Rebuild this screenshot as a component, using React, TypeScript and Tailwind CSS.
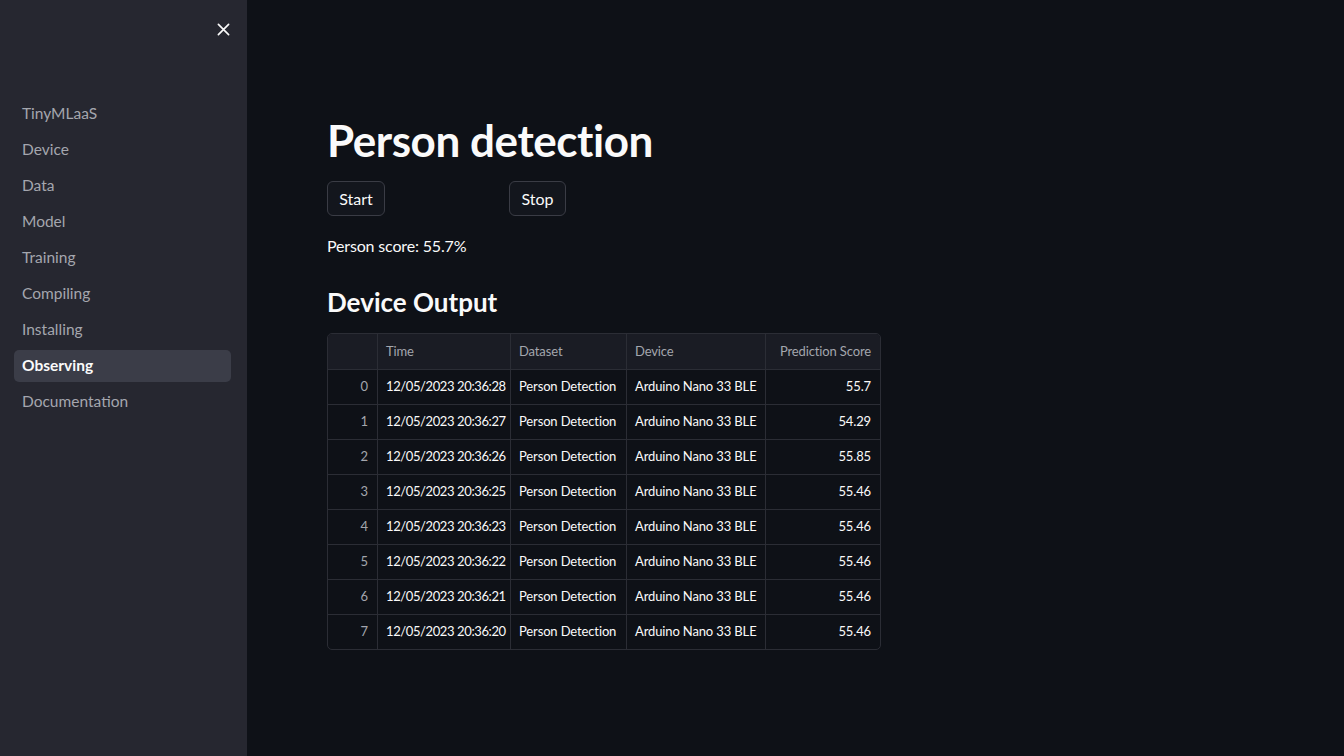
import React from "react";

const nav = ["TinyMLaaS", "Device", "Data", "Model", "Training", "Compiling", "Installing", "Observing", "Documentation"];

const rows = [
  ["0", "12/05/2023 20:36:28", "55.7"],
  ["1", "12/05/2023 20:36:27", "54.29"],
  ["2", "12/05/2023 20:36:26", "55.85"],
  ["3", "12/05/2023 20:36:25", "55.46"],
  ["4", "12/05/2023 20:36:23", "55.46"],
  ["5", "12/05/2023 20:36:22", "55.46"],
  ["6", "12/05/2023 20:36:21", "55.46"],
  ["7", "12/05/2023 20:36:20", "55.46"],
];

const cols = "grid grid-cols-[50px_133px_116px_139px_114px]";

export default function App() {
  return (
    <div
      className="flex h-[756px] w-[1344px] overflow-hidden bg-[#0e1117] text-[#fafafa]"
      style={{ fontFamily: "Lato, 'Noto Sans', sans-serif" }}
    >
      <aside className="flex w-[247px] shrink-0 flex-col bg-[#262730]">
        <div className="flex h-[46px] items-end justify-end pr-[17px]">
          <svg width="13" height="13" viewBox="0 0 14 14" className="mb-[10px]">
            <path d="M1.5 1.5L12.5 12.5M12.5 1.5L1.5 12.5" stroke="#fafafa" strokeWidth="1.8" strokeLinecap="round" />
          </svg>
        </div>
        <nav className="mt-[52px] flex flex-col gap-[4px] pl-[14px] pr-[16px]">
          {nav.map((n) => (
            <div
              key={n}
              className={
                n === "Observing"
                  ? "flex h-[32px] items-center rounded-[5px] bg-[#3b3d48] px-[8px] text-[15.5px] font-bold text-[#fafafa]"
                  : "flex h-[32px] items-center px-[8px] text-[15.5px] text-[#a4a6ae]"
              }
            >
              {n}
            </div>
          ))}
        </nav>
      </aside>
      <main className="flex-1 pl-[80px] pt-[112px]">
        <h1 className="text-[44px] font-bold leading-[56px] tracking-[-0.01em]">Person detection</h1>
        <div className="mt-[13px] flex gap-[124px]">
          <button className="h-[35px] w-[58px] rounded-[6px] border border-[#3a3c45] bg-[#13161d] text-[16px]">Start</button>
          <button className="h-[35px] w-[57px] rounded-[6px] border border-[#3a3c45] bg-[#13161d] text-[16px]">Stop</button>
        </div>
        <p className="mt-[18px] text-[16px] tracking-[-0.01em]">Person score: 55.7%</p>
        <h2 className="mt-[24px] text-[26px] font-bold leading-[40px]">Device Output</h2>
        <div className="mt-[11px] w-[554px] overflow-hidden rounded-[5px] border border-[#2b2d35] text-[13px] tracking-[-0.01em]">
          <div className={`${cols} h-[35px] bg-[#1a1c24] text-[#a3a6ad]`}>
            <div className="border-r border-[#2b2d35]" />
            <div className="flex items-center border-r border-[#2b2d35] px-[8px]">Time</div>
            <div className="flex items-center border-r border-[#2b2d35] px-[8px]">Dataset</div>
            <div className="flex items-center border-r border-[#2b2d35] px-[8px]">Device</div>
            <div className="flex items-center justify-end whitespace-nowrap px-[9px]">Prediction Score</div>
          </div>
          {rows.map((r) => (
            <div key={r[0]} className={`${cols} h-[35px] border-t border-[#2b2d35]`}>
              <div className="flex items-center justify-end border-r border-[#2b2d35] px-[9px] text-[#a3a6ad]">{r[0]}</div>
              <div className="flex items-center whitespace-nowrap border-r border-[#2b2d35] px-[8px] tracking-[-0.03em]">{r[1]}</div>
              <div className="flex items-center whitespace-nowrap border-r border-[#2b2d35] px-[8px]">Person Detection</div>
              <div className="flex items-center whitespace-nowrap border-r border-[#2b2d35] px-[8px]">Arduino Nano 33 BLE</div>
              <div className="flex items-center justify-end px-[9px]">{r[2]}</div>
            </div>
          ))}
        </div>
      </main>
    </div>
  );
}
